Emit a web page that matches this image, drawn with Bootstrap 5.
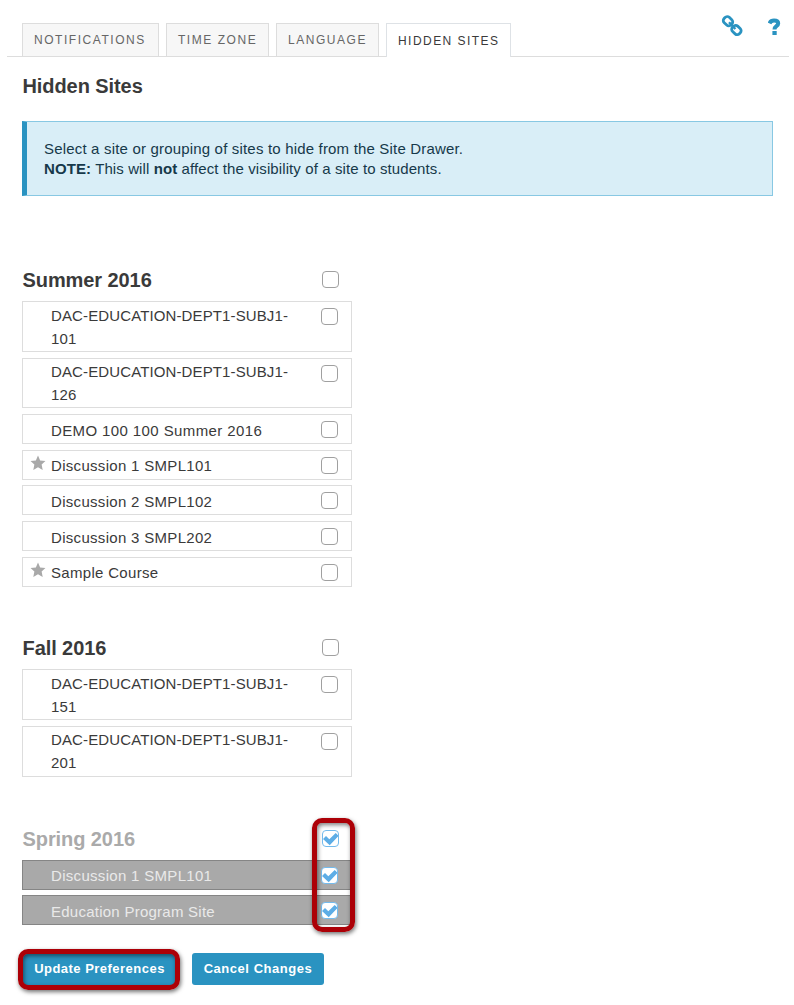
<!DOCTYPE html>
<html lang="en">
<head>
<meta charset="utf-8">
<meta name="viewport" content="width=device-width, initial-scale=1">
<title>Preferences - Hidden Sites</title>
<link href="https://cdn.jsdelivr.net/npm/bootstrap@5.3.0/dist/css/bootstrap.min.css" rel="stylesheet">
<style>
body{font-family:"Liberation Sans",Arial,sans-serif;font-size:15px;color:#3a3a3a;background:#fff;letter-spacing:.31px;min-height:1005px}
.topbar{margin:0 5px 0 7px;padding:23px 0 0 15px;height:57px;border-bottom:1px solid #ddd}
.tabs{gap:7px;border:0}
.tabs .nav-link{height:33px;padding:0 0 0 11px;border:1px solid #ddd;border-bottom:0;border-radius:0;background:#f7f7f7;color:#666;font-size:12px;line-height:32px;letter-spacing:1.54px;white-space:nowrap;margin:0}
.tabs .nav-link.active{height:34px;background:#fff;color:#3a3a3a;line-height:34px;letter-spacing:1.45px}
.w-a{width:137px}.w-b{width:103px}.w-c{width:125px}
.tools{margin:-9px 8px 0 0;gap:24px;color:#2a93c1}
.page-title{font-size:20px;font-weight:700;line-height:24px;margin:17px 0 23px .5px;letter-spacing:-.08px}
.content{padding:0 21px 0 22px}
.note{height:75px;border:1px solid #88c8e3;border-left:5px solid #2a93c1;border-radius:0;background:#d9eef7;color:#16394a;padding:17px;line-height:20px;margin:0 0 64px;letter-spacing:.18px}
.note-detail{letter-spacing:.1px}
.term{width:330px;margin-bottom:41.4px}
.term-late{margin-bottom:42.1px}
.term-head{height:40.95px;padding:7px 13px 0 .5px}
.term-head h2{font-size:20px;font-weight:700;line-height:24px;margin:1px 0 0;letter-spacing:-.08px}
.sites{gap:5.65px}
.site{border:1px solid #ddd;border-radius:0;color:#3a3a3a;background:#fff;height:30px;padding:0 13px 0 28px;line-height:23px}
.site span{padding-top:3.5px;width:250px}
.site.tall{height:50.95px}
.site.tall span{padding-top:1.6px;letter-spacing:.12px}
.site .wide-text{letter-spacing:.39px}
.site .tight-text{letter-spacing:.25px}
.site .form-check-input{margin-top:6px}
.form-check-input{width:17px;height:17px;border:1px solid #a0a0a0;border-radius:4px!important;margin:0;background-color:#fff;box-shadow:none}
.form-check-input:checked[type=checkbox]{background-color:#fff;border-color:#74bbed;background-image:url("data:image/svg+xml,%3Csvg xmlns='http://www.w3.org/2000/svg' viewBox='0 0 15 15'%3E%3Cpath d='M0 8.1 3 5.1 6.3 8.3 12.7 1.9 15 4.3 15 5.6 6.7 14.2z' fill='%235dade6'/%3E%3C/svg%3E");background-size:100% 100%}
.star{left:7px;top:4px}
.hidden-term h2{color:#aaa}
.hidden-term .site{background:#a9a9a9;border-color:#858585;color:#e9e9e9}
.marker{border:5px solid #ac0007;border-radius:10px;box-shadow:1px 2px 4px rgba(0,0,0,.55),inset 1px 2px 4px rgba(0,0,0,.5);pointer-events:none;z-index:3}
.m-checks{left:290px;top:-.5px;width:43px;height:114px}
.m-btn{left:-4px;top:-4px;width:162px;height:41px}
.actions{gap:17px;margin-top:-13.6px}
.actions .btn{height:32px;padding:0;border:0;border-radius:3px;background:#2a93c1;color:#fff;font-size:13px;font-weight:700;letter-spacing:.54px;line-height:31px}
.actions .b-a{width:153px;padding-left:2px;letter-spacing:.48px}.b-b{width:132px}
</style>
</head>
<body>
<header class="topbar d-flex justify-content-between">
  <ul class="nav nav-tabs tabs flex-nowrap">
    <li class="nav-item"><a class="nav-link w-a" href="#">NOTIFICATIONS</a></li>
    <li class="nav-item"><a class="nav-link w-b" href="#">TIME ZONE</a></li>
    <li class="nav-item"><a class="nav-link w-b" href="#">LANGUAGE</a></li>
    <li class="nav-item"><a class="nav-link w-c active" href="#">HIDDEN SITES</a></li>
  </ul>
  <div class="tools d-flex align-items-start">
    <svg width="24" height="24" viewBox="0 0 24 24" fill="none" stroke="currentColor" stroke-width="2.8"><rect x="-4.7" y="-3.7" width="9.4" height="7.4" rx="3" transform="translate(8 7.2) rotate(43)"/><rect x="-4.7" y="-3.7" width="9.4" height="7.4" rx="3" transform="translate(16.4 16) rotate(43)"/><path d="M9 8.2 L15.4 15" stroke-width="2.4"/></svg>
    <svg width="13" height="24" viewBox="0 0 13 24"><path d="M1.5 9.4C2.4 7.3 3.8 6.6 6 6.6C8.6 6.6 10.2 7.6 10.2 9.4C10.2 12.1 6.5 11.6 6.5 15.6" fill="none" stroke="currentColor" stroke-width="4"/><path d="M4.4 17h4.3v4H4.4z" fill="currentColor"/></svg>
  </div>
</header>
<main class="content">
  <h1 class="page-title">Hidden Sites</h1>
  <div class="alert note">Select a site or grouping of sites to hide from the Site Drawer.<br><span class="note-detail"><strong>NOTE:</strong> This will <strong>not</strong> affect the visibility of a site to students.</span></div>

  <section class="term">
    <div class="term-head d-flex justify-content-between"><h2>Summer 2016</h2><input class="form-check-input mt-1" type="checkbox" aria-label="Summer 2016"></div>
    <div class="sites d-flex flex-column">
      <label class="site tall d-flex justify-content-between"><span>DAC-EDUCATION-DEPT1-SUBJ1-101</span><input class="form-check-input" type="checkbox"></label>
      <label class="site tall d-flex justify-content-between"><span>DAC-EDUCATION-DEPT1-SUBJ1-126</span><input class="form-check-input" type="checkbox"></label>
      <label class="site d-flex justify-content-between"><span class="wide-text">DEMO 100 100 Summer 2016</span><input class="form-check-input" type="checkbox"></label>
      <label class="site d-flex justify-content-between position-relative"><svg class="star position-absolute" width="16" height="16" viewBox="0 0 15 15"><path fill="#a9a9a9" d="M7.5 .5 9.5 5.1 14.5 5.6 10.9 9 11.9 14 7.5 11.4 3.1 14 4.1 9 .5 5.6 5.5 5.1z"/></svg><span>Discussion 1 SMPL101</span><input class="form-check-input" type="checkbox"></label>
      <label class="site d-flex justify-content-between"><span>Discussion 2 SMPL102</span><input class="form-check-input" type="checkbox"></label>
      <label class="site d-flex justify-content-between"><span>Discussion 3 SMPL202</span><input class="form-check-input" type="checkbox"></label>
      <label class="site d-flex justify-content-between position-relative"><svg class="star position-absolute" width="16" height="16" viewBox="0 0 15 15"><path fill="#a9a9a9" d="M7.5 .5 9.5 5.1 14.5 5.6 10.9 9 11.9 14 7.5 11.4 3.1 14 4.1 9 .5 5.6 5.5 5.1z"/></svg><span>Sample Course</span><input class="form-check-input" type="checkbox"></label>
    </div>
  </section>

  <section class="term term-late">
    <div class="term-head d-flex justify-content-between"><h2>Fall 2016</h2><input class="form-check-input mt-1" type="checkbox" aria-label="Fall 2016"></div>
    <div class="sites d-flex flex-column">
      <label class="site tall d-flex justify-content-between"><span>DAC-EDUCATION-DEPT1-SUBJ1-151</span><input class="form-check-input" type="checkbox"></label>
      <label class="site tall d-flex justify-content-between"><span>DAC-EDUCATION-DEPT1-SUBJ1-201</span><input class="form-check-input" type="checkbox"></label>
    </div>
  </section>

  <section class="term hidden-term position-relative">
    <div class="term-head d-flex justify-content-between"><h2>Spring 2016</h2><input class="form-check-input mt-1" type="checkbox" checked aria-label="Spring 2016"></div>
    <div class="sites d-flex flex-column">
      <label class="site d-flex justify-content-between"><span>Discussion 1 SMPL101</span><input class="form-check-input" type="checkbox" checked></label>
      <label class="site d-flex justify-content-between"><span class="tight-text">Education Program Site</span><input class="form-check-input" type="checkbox" checked></label>
    </div>
    <div class="marker m-checks position-absolute"></div>
  </section>

  <div class="actions d-flex">
    <div class="position-relative"><button class="btn b-a" type="button">Update Preferences</button><div class="marker m-btn position-absolute"></div></div>
    <button class="btn b-b" type="button">Cancel Changes</button>
  </div>
</main>
<script src="https://cdn.jsdelivr.net/npm/bootstrap@5.3.0/dist/js/bootstrap.bundle.min.js"></script>
</body>
</html>
